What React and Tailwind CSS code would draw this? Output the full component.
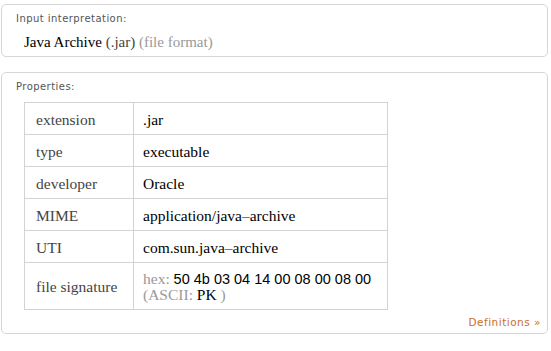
export default function App() {
  const rows = [
    ["extension", ".jar"],
    ["type", "executable"],
    ["developer", "Oracle"],
    ["MIME", "application/java\u2013archive"],
    ["UTI", "com.sun.java\u2013archive"],
  ];

  return (
    <div className="w-[551px] h-[351px] bg-white pt-[4px] pl-[1px] pr-[3px] flex flex-col gap-[15px]">
      <div className="h-[53px] border border-[#d6d6d6] rounded-[5px] flex flex-col">
        <div className="pl-[14px] pt-[7px] text-[10px] leading-[14px] text-[#555] tracking-[0.45px] font-['DejaVu_Sans',sans-serif]">
          Input interpretation:
        </div>
        <div className="pl-[22px] pt-[8px] text-[15px] leading-[17px] font-['Liberation_Serif',serif]">
          <span className="text-black">Java Archive</span>
          <span className="text-[#444]"> (.jar)</span>
          <span className="text-[#999]">  (file format)</span>
        </div>
      </div>

      <div className="h-[262px] border border-[#d6d6d6] rounded-[5px] flex flex-col">
        <div className="pl-[14px] pt-[7px] text-[10px] leading-[14px] text-[#555] tracking-[0.45px] font-['DejaVu_Sans',sans-serif]">
          Properties:
        </div>
        <table className="ml-[22px] mt-[8px] w-[364px] border-collapse font-['Liberation_Serif',serif] text-[15.5px]">
          <tbody>
            {rows.map(([k, v]) => (
              <tr key={k} className="h-[32px]">
                <td className="w-[109px] border border-[#d3d3d3] pl-[11px] pt-[2px] text-[#444]">{k}</td>
                <td className="border border-[#d3d3d3] pl-[9px] pt-[2px] text-black">{v}</td>
              </tr>
            ))}
            <tr className="h-[47px]">
              <td className="border border-[#d3d3d3] pl-[11px] pt-[2px] text-[#444]">file signature</td>
              <td className="border border-[#d3d3d3] pl-[9px] pt-[2px] leading-[16px]">
                <div>
                  <span className="text-[#999]">hex: </span>
                  <span className="text-black font-['Liberation_Sans',sans-serif] text-[14.5px]">50 4b 03 04 14 00 08 00 08 00</span>
                </div>
                <div>
                  <span className="text-[#999]">(ASCII: </span>
                  <span className="text-black">PK </span>
                  <span className="text-[#999]">)</span>
                </div>
              </td>
            </tr>
          </tbody>
        </table>
        <div className="mt-auto pb-[2px] pr-[6px] text-right text-[10.5px] tracking-[0.5px] text-[#c86f2c] font-['DejaVu_Sans',sans-serif]">
          Definitions »
        </div>
      </div>
    </div>
  );
}
